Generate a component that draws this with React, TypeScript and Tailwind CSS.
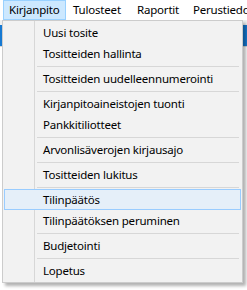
import React from "react";

type Entry = { label: string; active?: boolean } | "sep";

const entries: Entry[] = [
  { label: "Uusi tosite" },
  { label: "Tositteiden hallinta" },
  "sep",
  { label: "Tositteiden uudelleennumerointi" },
  "sep",
  { label: "Kirjanpitoaineistojen tuonti" },
  { label: "Pankkitiliotteet" },
  "sep",
  { label: "Arvonlisäverojen kirjausajo" },
  "sep",
  { label: "Tositteiden lukitus" },
  "sep",
  { label: "Tilinpäätös", active: true },
  { label: "Tilinpäätöksen peruminen" },
  "sep",
  { label: "Budjetointi" },
  "sep",
  { label: "Lopetus" },
];

const topMenus = [
  { label: "Kirjanpito", w: "w-[63px]" },
  { label: "Tulosteet", w: "w-[64px]" },
  { label: "Raportit", w: "w-[56px]" },
  { label: "Perustiedot", w: "w-[80px]" },
];

const App = () => {
  return (
    <div
      className="relative w-[247px] h-[290px] overflow-hidden bg-[#f0f0f0] text-[11.5px] tracking-[-0.2px] text-black"
      style={{ fontFamily: '"Noto Sans", "Segoe UI", sans-serif' }}
    >
      {/* menu bar */}
      <div className="flex h-[20px] bg-white pl-[3px] whitespace-nowrap">
        {topMenus.map((m, i) => (
          <div
            key={m.label}
            className={
              i === 0
                ? `flex shrink-0 items-center pl-[5px] border border-[#99d1ff] bg-[#cce8ff] ${m.w}`
                : `flex shrink-0 items-center pl-[6px] border border-transparent ${m.w}`
            }
          >
            {m.label}
          </div>
        ))}
      </div>

      {/* window content behind the menu */}
      <div className="mt-[5px] h-[21px] bg-[#1679d2]" />
      <div className="h-[1px] bg-[#d9d9d9]" />
      <div className="h-[243px] bg-white" />

      {/* dropdown */}
      <div className="absolute left-[2px] top-[20px] w-[241px] border border-[#cccccc] bg-[#f2f2f2] py-[1px] shadow-[3px_3px_3px_rgba(0,0,0,0.3)]">
        <div className="absolute left-[31px] top-0 bottom-0 w-[1px] bg-[#d7d7d7]" />
        {entries.map((e, i) =>
          e === "sep" ? (
            <div key={i} className="flex h-[4px] items-center pl-[34px] pr-[3px]">
              <div className="h-[1px] w-full bg-[#d7d7d7]" />
            </div>
          ) : (
            <div
              key={i}
              className={
                e.active
                  ? "relative z-10 mx-[1px] flex h-[21px] items-center border border-[#99ccff] bg-[#e5eff9] pl-[38px] whitespace-nowrap"
                  : "flex h-[21px] items-center pl-[40px] whitespace-nowrap"
              }
            >
              {e.label}
            </div>
          )
        )}
      </div>
    </div>
  );
};

export default App;
